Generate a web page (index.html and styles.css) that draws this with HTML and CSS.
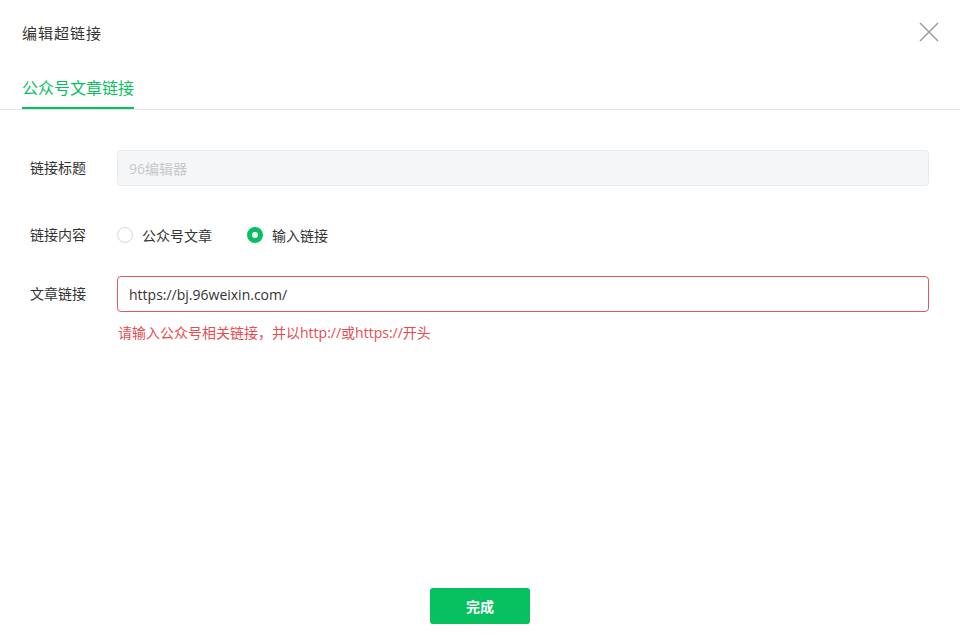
FILE: index.html
```html
<!DOCTYPE html>
<html lang="zh-CN">
<head>
    <meta charset="UTF-8">
    <meta name="viewport" content="width=device-width, initial-scale=1.0">
    <title>编辑超链接</title>
    <link rel="stylesheet" href="styles.css">
</head>
<body>
    <div class="dialog">
        <div class="dialog-header">
            <span class="dialog-title">编辑超链接</span>
            <button class="close-btn" aria-label="关闭">
                <svg width="20" height="20" viewBox="0 0 20 20">
                    <path d="M1 1L19 19M19 1L1 19" stroke="#999" stroke-width="1.4" fill="none"/>
                </svg>
            </button>
        </div>

        <div class="tabs">
            <div class="tab active">公众号文章链接</div>
        </div>

        <div class="form">
            <div class="form-row row-title">
                <label class="form-label">链接标题</label>
                <input type="text" class="input disabled" placeholder="96编辑器" disabled>
            </div>

            <div class="form-row row-radio">
                <label class="form-label">链接内容</label>
                <div class="radios">
                    <label class="radio"><span class="radio-dot"></span>公众号文章</label>
                    <label class="radio checked"><span class="radio-dot"></span>输入链接</label>
                </div>
            </div>

            <div class="form-row row-link">
                <label class="form-label">文章链接</label>
                <div class="field">
                    <input type="text" class="input error" value="https://bj.96weixin.com/">
                    <div class="error-text">请输入公众号相关链接，并以http://或https://开头</div>
                </div>
            </div>
        </div>

        <div class="dialog-footer">
            <button class="btn-primary">完成</button>
        </div>
    </div>
</body>
</html>
```

FILE: styles.css
```css
body {
    margin: 0;
    background: #fff;
    font-family: "Open Sans", "Noto Sans CJK SC", sans-serif;
    color: #333;
}

.dialog {
    width: 960px;
    height: 635px;
    display: flex;
    flex-direction: column;
    background: #fff;
}

.dialog-header {
    height: 64px;
    display: flex;
    align-items: center;
    justify-content: space-between;
    padding: 0 21px 0 22px;
}

.dialog-title {
    font-size: 15px;
    color: #333;
    letter-spacing: 1px;
}

.close-btn {
    width: 20px;
    height: 20px;
    padding: 0;
    border: none;
    background: none;
    cursor: pointer;
}

.tabs {
    display: flex;
    padding: 0 22px;
    border-bottom: 1px solid #e5e5e5;
}

.tab {
    font-size: 16px;
    line-height: 22px;
    padding: 13px 0 8px;
    border-bottom: 2px solid transparent;
}

.tab.active {
    color: #07c160;
    border-bottom-color: #07c160;
}

.form {
    padding: 40px 31px 0 30px;
}

.form-row {
    display: flex;
    align-items: flex-start;
}

.form-label {
    width: 87px;
    flex-shrink: 0;
    font-size: 14px;
    line-height: 36px;
    color: #333;
}

.row-title {
    margin-bottom: 31px;
}

.row-radio {
    margin-bottom: 23px;
}

.input {
    box-sizing: border-box;
    width: 100%;
    height: 36px;
    padding: 0 11px;
    font-family: inherit;
    font-size: 14px;
    color: #333;
    border: 1px solid #dcdfe6;
    border-radius: 4px;
    outline: none;
}

.input.disabled {
    background: #f5f6f7;
    border-color: #e8eaed;
}

.input::placeholder {
    color: #c5c8ce;
}

.input.error {
    border-color: #e0585c;
}

.field {
    flex: 1;
}

.error-text {
    margin-top: 12px;
    padding-left: 1px;
    font-size: 14px;
    line-height: 18px;
    color: #e94b4f;
}

.radios {
    display: flex;
    align-items: center;
    height: 36px;
    gap: 35px;
}

.radio {
    display: flex;
    align-items: center;
    font-size: 14px;
    color: #333;
    cursor: pointer;
}

.radio-dot {
    box-sizing: border-box;
    width: 16px;
    height: 16px;
    margin-right: 9px;
    border: 1px solid #d4d6da;
    border-radius: 50%;
    background: #fff;
}

.radio.checked .radio-dot {
    border: 5px solid #07c160;
}

.dialog-footer {
    margin-top: auto;
    padding-bottom: 11px;
    display: flex;
    justify-content: center;
}

.btn-primary {
    width: 100px;
    height: 36px;
    border: none;
    border-radius: 3px;
    background: #07c160;
    color: #fff;
    font-family: inherit;
    font-size: 14px;
    font-weight: bold;
    cursor: pointer;
}
```
